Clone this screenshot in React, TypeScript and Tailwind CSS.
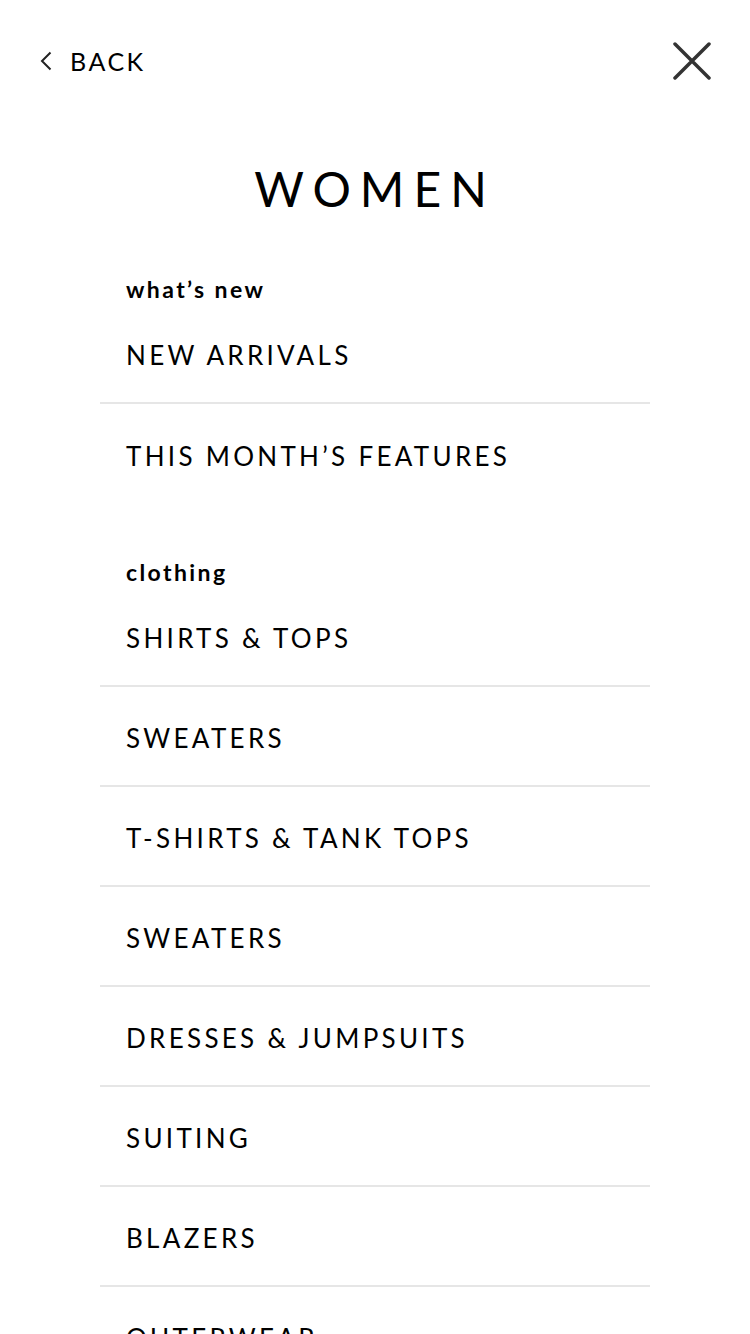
import React from "react";

const font = { fontFamily: "Lato, 'Noto Sans', sans-serif" };

function Row({ label, border = true }: { label: string; border?: boolean }) {
  return (
    <div
      className={
        "h-[100px] flex items-center pl-[26px] pt-[4px] " +
        (border ? "border-b-2 border-[#e6e6e6]" : "")
      }
    >
      <span className="text-[26px] leading-none tracking-[3.3px] text-black">{label}</span>
    </div>
  );
}

function Header({ label }: { label: string }) {
  return (
    <div className="h-[30px] flex items-center pl-[26px]">
      <span className="text-[23px] font-bold leading-none tracking-[2.4px] text-black">{label}</span>
    </div>
  );
}

export default function App() {
  const clothing = [
    "SHIRTS & TOPS",
    "SWEATERS",
    "T-SHIRTS & TANK TOPS",
    "SWEATERS",
    "DRESSES & JUMPSUITS",
    "SUITING",
    "BLAZERS",
    "OUTERWEAR",
  ];
  return (
    <div className="w-[750px] h-[1334px] overflow-hidden bg-white" style={font}>
      <div className="pt-[40px] pl-[40px] pr-[39px] h-[82px] flex items-center justify-between">
        <div className="flex items-center gap-[18px]">
          <svg width="12" height="20" viewBox="0 0 12 20" fill="none">
            <path d="M10.5 1.5 L2 10 L10.5 18.5" stroke="#222" strokeWidth="2" />
          </svg>
          <span className="text-[25px] leading-none tracking-[2.5px] text-black">BACK</span>
        </div>
        <svg width="38" height="38" viewBox="0 0 38 38" fill="none">
          <path d="M2 2 L36 36 M36 2 L2 36" stroke="#333" strokeWidth="3.5" strokeLinecap="round" />
        </svg>
      </div>

      <div className="mt-[79px] h-[56px] flex items-center justify-center">
        <span className="text-[48px] leading-none tracking-[9px] text-black">WOMEN</span>
      </div>

      <div className="ml-[100px] w-[550px]">
        <div className="mt-[57px]">
          <Header label="what’s new" />
          <Row label="NEW ARRIVALS" />
          <Row label="THIS MONTH’S FEATURES" border={false} />
        </div>
        <div className="mt-[53px]">
          <Header label="clothing" />
          {clothing.map((c, i) => (
            <Row key={i} label={c} />
          ))}
        </div>
      </div>
    </div>
  );
}
